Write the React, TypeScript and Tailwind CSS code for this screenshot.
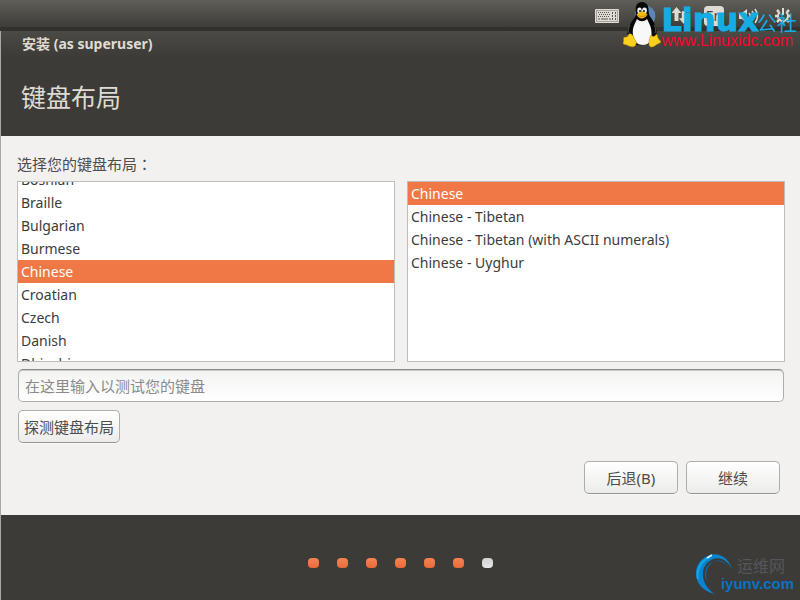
import React from 'react';
import clsx from 'clsx';

const layouts = ['Bosnian', 'Braille', 'Bulgarian', 'Burmese', 'Chinese', 'Croatian', 'Czech', 'Danish', 'Dhivehi'];
const variants = ['Chinese', 'Chinese - Tibetan', 'Chinese - Tibetan (with ASCII numerals)', 'Chinese - Uyghur'];

const buttonClass =
  'h-[33px] rounded-[5px] border border-[#b0aeaa] border-b-[#96948f] bg-linear-to-b from-white to-[#ececea] text-[15px] leading-5 text-[#4c4c4c] shadow-[0_1px_0_#fafafa] hover:to-white';

type ListBoxProps = {
  label: string;
  items: string[];
  initial: string;
  scrollTop?: number;
};

const ListBox: React.FC<ListBoxProps> = ({ label, items, initial, scrollTop = 0 }) => {
  const [selected, setSelected] = React.useState(initial);
  const listRef = React.useRef<HTMLDivElement>(null);

  React.useLayoutEffect(() => {
    if (listRef.current) listRef.current.scrollTop = scrollTop;
  }, [scrollTop]);

  return (
    <div
      ref={listRef}
      role="listbox"
      aria-label={label}
      className="h-[181px] flex-1 overflow-y-auto border border-[#bfbdb9] bg-white [scrollbar-width:none]"
    >
      {items.map((item) => (
        <button
          key={item}
          type="button"
          role="option"
          aria-selected={item === selected}
          onClick={() => setSelected(item)}
          className={clsx(
            'block h-[23px] w-full px-[3px] text-left text-sm leading-[23px]',
            item === selected ? 'bg-[#f07746] text-white' : 'text-[#3c3c3c]',
          )}
        >
          {item}
        </button>
      ))}
    </div>
  );
};

const KeyboardIcon = () => (
  <svg width="24" height="14" viewBox="0 0 24 14" aria-hidden="true">
    <rect width="24" height="14" rx="1" fill="#dfdbd2" />
    <rect x="1.500" y="1.500" width="21" height="11" fill="none" stroke="#a5a39b" />
    <path d="M3 3.500h12M3 7.500h12" stroke="#55544e" strokeDasharray="1 1" />
    <path d="M4 5.500h11" stroke="#55544e" strokeDasharray="1 1" />
    <path d="M3 10h2M6 10h7M14 10h2" stroke="#55544e" />
    <path d="M17.500 3v8M20.500 3v8" stroke="#55544e" strokeDasharray="2 1" />
  </svg>
);

const PersonIcon = () => (
  <svg width="22" height="22" viewBox="0 0 22 22" aria-hidden="true">
    <circle cx="11" cy="11" r="10.500" fill="#5c86b8" />
    <circle cx="11" cy="6" r="2" fill="#f2f1f0" />
    <path d="M7 9h8M11 8v6l-3 6M11 14l3 6" stroke="#f2f1f0" strokeWidth="2" fill="none" />
  </svg>
);

const NetworkIcon = () => (
  <svg width="18" height="18" viewBox="0 0 18 18" fill="#dfdbd2" aria-hidden="true">
    <path d="M5.500 0l5 6h-3v8h-4V6h-3z" />
    <path d="M12.500 17l-5-6h3V4h4v7h3z" stroke="#504f49" strokeWidth="0.500" />
  </svg>
);

const SoundIcon = () => (
  <svg width="20" height="18" viewBox="0 0 20 18" aria-hidden="true">
    <path d="M0 6h3l5-4v14l-5-4H0z" fill="#dfdbd2" />
    <path d="M10 6q2.500 3 0 6M13 4q4 5 0 10M16 2q5 7 0 14" fill="none" stroke="#dfdbd2" strokeWidth="1.500" />
  </svg>
);

const GearIcon = () => (
  <svg width="18" height="18" viewBox="0 0 18 18" fill="none" stroke="#dfdbd2" aria-hidden="true">
    <path d="M6 5a5 5 0 1 0 6 0" strokeWidth="2" />
    <path d="M9 1v7" strokeWidth="2" />
    <path d="M3 3l2 2M15 3l-2 2M1 9h3M17 9h-3M3 15l2-2M15 15l-2-2M9 17v-3" strokeWidth="2.500" />
  </svg>
);

const Penguin = () => (
  <svg width="38" height="46" viewBox="0 0 38 46" aria-hidden="true">
    <path
      d="M19 0c-4 0-6.500 3-6.300 7 .2 4 .5 6-1.500 9C8 20 5 25 4.500 30c-.3 4 2 9 5 11 4 3 14 3 18 0 4-3 6.500-7 6-12-.6-5-3-10-6-14-1.500-2-1.800-4-2-8-.2-4-2.500-7-6.500-7z"
      fill="#080808"
    />
    <path d="M14 17c-2 5-5 8-4 16 1 7 5 10 10 10s8-3 8.500-10c.5-7-2-11-4.500-16-3 3-7 3-10 0z" fill="#f8f8f8" />
    <path d="M7 23c-2 3-2 6-1 8M31 23c2 3 2 6 1 8" stroke="#55565a" fill="none" />
    <ellipse cx="16.500" cy="8.500" rx="2.200" ry="3" fill="#f4f4f4" />
    <ellipse cx="21.500" cy="8.500" rx="2.400" ry="3" fill="#f4f4f4" />
    <circle cx="17" cy="9" r="1" fill="#111" />
    <circle cx="21" cy="9" r="1" fill="#111" />
    <path d="M13.500 12.500c2-2 4-3 5.500-2.800 2 .1 4 1.300 5.500 2.600-1 2.500-3.500 4-5.500 4.200-2 0-4.500-1.500-5.500-4z" fill="#f7b90c" />
    <path d="M14 13c3 2 7 2 10-.3" stroke="#b97800" strokeWidth="0.700" fill="none" />
    <path
      d="M6 32c2-1 4 1 5 4 1 2 3 4 2 6-1 3-4 3.500-7 2-2-1-4-1.500-5.500-2-1-.5 0-2 .2-3 .1-1.300-.5-2.700.3-3.500 1-.7 3 0 3.500-1 .6-.8.8-2 1.500-2.500z"
      fill="#fbd01c"
      stroke="#c58a00"
      strokeWidth="0.500"
    />
    <path
      d="M28 33c1 2 4 2 5-.5 1.500-.5 1.500 2 2 3.500.6 1.500 2.500 2.500 2.700 3.700 0 1.500-3 2-4.700 3.300-2 1.700-5 3-6.500 1-1.500-3 .2-9 1.500-11z"
      fill="#fbd01c"
      stroke="#c58a00"
      strokeWidth="0.500"
    />
  </svg>
);

const LinuxWatermark = () => (
  <div className="pointer-events-none absolute top-0.5 right-[3px] flex items-start">
    <Penguin />
    <div className="flex flex-col">
      <div className="flex h-[31px] items-start text-[#14ace3]">
        <span className="font-['DejaVu_Sans'] text-[32px] leading-9 font-bold [-webkit-text-stroke:1px_#14ace3]">Linux</span>
        <span className="mt-2.5 -ml-0.5 text-[20px] leading-6">公社</span>
      </div>
      <span className="font-['Liberation_Sans'] text-base leading-4 text-[#f5052c]">www.Linuxidc.com</span>
    </div>
  </div>
);

const IyunvWatermark = () => (
  <div className="pointer-events-none absolute right-1.5 bottom-1 flex">
    <svg width="40" height="44" viewBox="0 0 40 44" className="-mr-3.5" aria-hidden="true">
      <path d="M37 17C33 3 19-2 9 6-4 15-2 37 20 42 8 35 4 20 12 11 20 3 31 5 37 17z" fill="#0785cf" />
      <path d="M36 20C31 6 15 6 11 17c-2 6 0 11 2 14C9 22 12 12 20 9c7-2 12 2 16 11z" fill="#0d6eab" />
      <path d="M3 27C1 17 7 8 15 5" stroke="#13a8e7" strokeWidth="2" fill="none" />
      <path d="M12 6l5-3" stroke="#d7f3ff" strokeWidth="1.500" />
    </svg>
    <div className="flex flex-col items-end pt-1">
      <span className="pr-[9px] text-base leading-5 text-[#55565c]">运维网</span>
      <span className="font-['Liberation_Sans'] text-[15px] leading-4 font-bold text-[#0872c4]">iyunv.com</span>
    </div>
  </div>
);

export default function App() {
  const steps = 7;

  return (
    <div className="relative flex min-h-screen flex-col bg-[#3c3b37] font-['Noto_Sans','Noto_Sans_CJK_SC',sans-serif]">
      {/* Top panel */}
      <header className="flex h-[31px] items-center justify-end gap-[15px] border-b-4 border-[#32312d] bg-linear-to-b from-[#5f5e57] to-[#3e3d39] pt-1 pr-2">
        <KeyboardIcon />
        <PersonIcon />
        <NetworkIcon />
        <span className="h-5 w-5 rounded-sm bg-[#dfdbd2] text-center text-sm leading-5 text-[#45443f]">En</span>
        <SoundIcon />
        <GearIcon />
      </header>

      <div className="flex flex-1 flex-col border-l border-[#aaa8a2]">
        <div className="bg-linear-to-b from-[#4b4a45] to-[#3c3b37] px-[21px] pt-[3px] pb-[3px]">
          <div className="text-sm leading-5 font-bold text-[#dfdbd2]">安装 (as superuser)</div>
        </div>
        <h1 className="px-5 pt-6 pb-[23px] text-[25px] leading-8 text-[#dfdbd2]">键盘布局</h1>

        <main className="flex flex-col bg-[#f2f1f0] px-4 pt-[18px] pb-[21px]">
          <p className="text-[15px] leading-5 text-[#4c4c4c]">
            选择您的键盘布局<span className="font-['Noto_Sans_CJK_TC']">：</span>
          </p>
          <div className="mt-[7px] -mr-px flex gap-3">
            <ListBox label="键盘布局" items={layouts} initial="Chinese" scrollTop={14} />
            <ListBox label="布局变体" items={variants} initial="Chinese" />
          </div>
          <input
            type="text"
            aria-label="在这里输入以测试您的键盘"
            placeholder="在这里输入以测试您的键盘"
            className="mt-[7px] ml-px h-[33px] rounded-[5px] border border-[#b0aeaa] border-t-[#8e8d88] bg-linear-to-b from-[#f3f3f2] to-white px-1.5 text-[15px] text-[#3c3c3c] shadow-[inset_0_1px_0_#c9c8c5] placeholder:text-[#8a8a8a]"
          />
          <button type="button" className={clsx(buttonClass, 'mt-2 ml-px w-[102px] self-start')}>
            探测键盘布局
          </button>
          <div className="mt-[18px] mr-1 flex justify-end gap-2">
            <button type="button" className={clsx(buttonClass, 'w-[94px]')}>后退(B)</button>
            <button type="button" className={clsx(buttonClass, 'w-[94px]')}>继续</button>
          </div>
        </main>

        {/* Install progress */}
        <footer className="flex flex-1 items-center justify-center gap-[18px] pt-2.5">
          {Array.from({ length: steps }, (_, i) => (
            <span
              key={i}
              className={clsx(
                'h-2.5 w-[11px] rounded bg-linear-to-b',
                i < steps - 1 ? 'from-[#f58453] to-[#e76b38]' : 'from-[#d2d2d2] to-[#e8e8e8]',
              )}
            />
          ))}
        </footer>
      </div>

      <LinuxWatermark />
      <IyunvWatermark />
    </div>
  );
}
